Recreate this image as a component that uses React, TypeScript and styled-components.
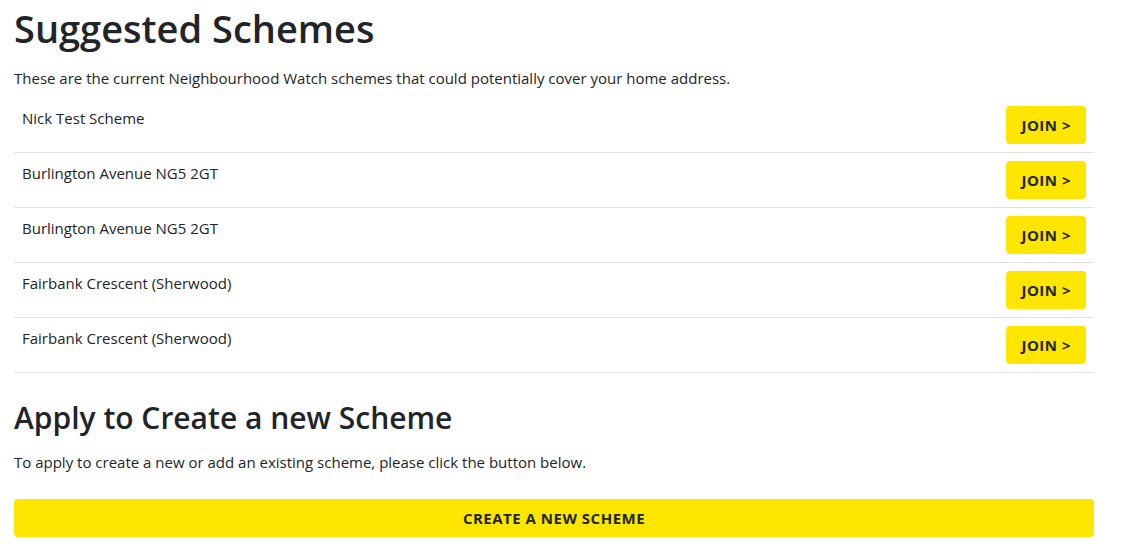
import * as React from 'react';
import styled, { createGlobalStyle } from 'styled-components';

const schemes = [
  'Nick Test Scheme',
  'Burlington Avenue NG5 2GT',
  'Burlington Avenue NG5 2GT',
  'Fairbank Crescent (Sherwood)',
  'Fairbank Crescent (Sherwood)',
];

const GlobalStyle = createGlobalStyle`
  body {
    margin: 0;
    background: #fff;
    color: #212529;
    font-family: "Open Sans", "Noto Sans", sans-serif;
  }
`;

const Page = styled.main`
  width: 1080px;
  margin-left: 14px;
  padding-top: 4px;
`;

const Title = styled.h1`
  margin: 0 0 14px;
  font-size: 38px;
  line-height: 48px;
  font-weight: 600;
`;

const SubTitle = styled.h2`
  margin: 0 0 14px;
  font-size: 30px;
  line-height: 36px;
  font-weight: 600;
`;

const Lead = styled.p`
  margin: 0 0 8px;
  font-size: 15px;
  line-height: 24px;
`;

const SchemeList = styled.ul`
  list-style: none;
  margin: 0 0 27px;
  padding: 0;
`;

const SchemeRow = styled.li`
  display: flex;
  justify-content: space-between;
  align-items: flex-start;
  padding: 8px;
  border-bottom: 1px solid #dee2e6;
`;

const SchemeName = styled.span`
  font-size: 15px;
  line-height: 24px;
`;

const YellowButton = styled.button<{ $block?: boolean }>`
  display: ${(p) => (p.$block ? 'block' : 'inline-block')};
  width: ${(p) => (p.$block ? '100%' : 'auto')};
  height: 38px;
  padding: 0 15px;
  border: none;
  border-radius: 4px;
  background: #ffe600;
  color: #212529;
  font-family: inherit;
  font-size: 15px;
  font-weight: 700;
  letter-spacing: 0.5px;
  cursor: pointer;
`;

const CreateWrap = styled.div`
  margin-top: 25px;
`;

export default function App() {
  return (
    <>
      <GlobalStyle />
      <Page>
        <Title>Suggested Schemes</Title>
        <Lead>
          These are the current Neighbourhood Watch schemes that could potentially cover your home address.
        </Lead>
        <SchemeList>
          {schemes.map((name, i) => (
            <SchemeRow key={i}>
              <SchemeName>{name}</SchemeName>
              <YellowButton>JOIN &gt;</YellowButton>
            </SchemeRow>
          ))}
        </SchemeList>
        <SubTitle>Apply to Create a new Scheme</SubTitle>
        <Lead>To apply to create a new or add an existing scheme, please click the button below.</Lead>
        <CreateWrap>
          <YellowButton $block>CREATE A NEW SCHEME</YellowButton>
        </CreateWrap>
      </Page>
    </>
  );
}
